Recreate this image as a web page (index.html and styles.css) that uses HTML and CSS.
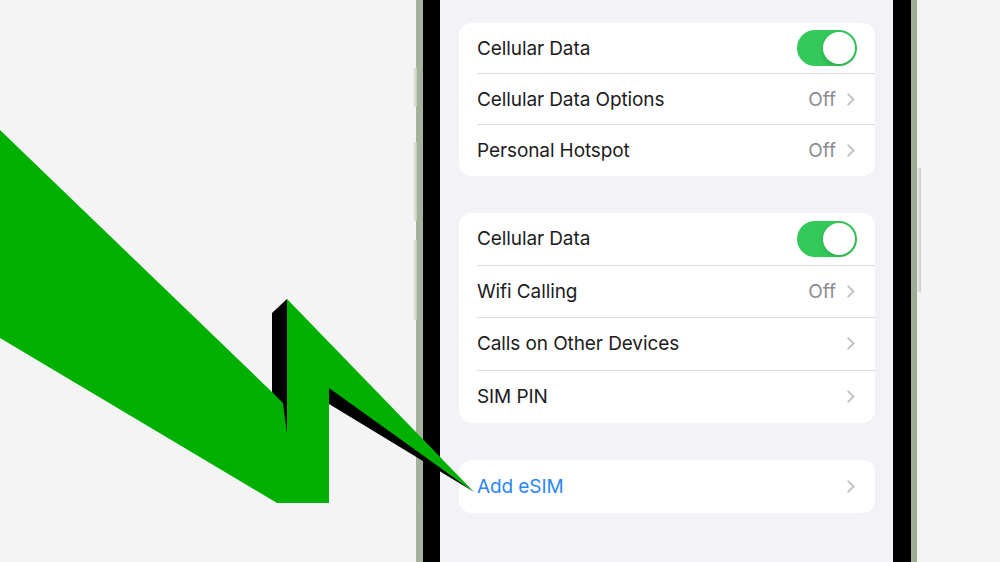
FILE: index.html
```html
<!DOCTYPE html>
<html>
<head>
<meta charset="utf-8">
<link rel="stylesheet" href="styles.css">
</head>
<body>
<div class="stage">
  <div class="phone">
    <span class="btn btn-l1"></span>
    <span class="btn btn-l2"></span>
    <span class="btn btn-l3"></span>
    <span class="btn btn-r1"></span>
    <div class="bezel">
      <div class="screen">
        <div class="card card-a">
          <div class="row"><span class="label">Cellular Data</span><span class="toggle"><span class="knob"></span></span></div>
          <div class="row"><span class="label">Cellular Data Options</span><span class="value">Off</span><svg class="chev" viewBox="0 0 8 13"><path d="M1.2 1.2 L6.6 6.5 L1.2 11.8"/></svg></div>
          <div class="row"><span class="label">Personal Hotspot</span><span class="value">Off</span><svg class="chev" viewBox="0 0 8 13"><path d="M1.2 1.2 L6.6 6.5 L1.2 11.8"/></svg></div>
        </div>
        <div class="card card-b">
          <div class="row"><span class="label">Cellular Data</span><span class="toggle"><span class="knob"></span></span></div>
          <div class="row"><span class="label">Wifi Calling</span><span class="value">Off</span><svg class="chev" viewBox="0 0 8 13"><path d="M1.2 1.2 L6.6 6.5 L1.2 11.8"/></svg></div>
          <div class="row"><span class="label">Calls on Other Devices</span><svg class="chev" viewBox="0 0 8 13"><path d="M1.2 1.2 L6.6 6.5 L1.2 11.8"/></svg></div>
          <div class="row"><span class="label">SIM PIN</span><svg class="chev" viewBox="0 0 8 13"><path d="M1.2 1.2 L6.6 6.5 L1.2 11.8"/></svg></div>
        </div>
        <div class="card card-c">
          <div class="row"><span class="label link">Add eSIM</span><svg class="chev" viewBox="0 0 8 13"><path d="M1.2 1.2 L6.6 6.5 L1.2 11.8"/></svg></div>
        </div>
      </div>
    </div>
  </div>
</div>
<svg class="arrow" viewBox="0 0 1000 562" width="1000" height="562">
  <polygon class="shadow" points="272,313 287,299 287,434 272,392"/>
  <polygon class="shadow" points="329,386 474,492 329,404"/>
  <polygon class="green" points="0,130 272,392 283,403 287,434 287,299 474,492 329,388 329,503 277,503 0,338"/>
</svg>
</body>
</html>
```

FILE: styles.css
```css
html, body {
  margin: 0;
  padding: 0;
  width: 1000px;
  height: 562px;
  overflow: hidden;
  background: #f4f4f5;
  font-family: Inter, "Liberation Sans", Arial, sans-serif;
}

.stage {
  display: flex;
  padding-left: 416px;
  height: 562px;
}

.phone {
  position: relative;
  width: 501px;
  height: 562px;
  padding: 0 6px 0 7px;
  box-sizing: border-box;
  background: linear-gradient(90deg, #a3b09c 0, #dde4d8 25%, #cfd8ca 60%, #9eab97 100%);
  display: flex;
}

.btn {
  position: absolute;
  width: 4px;
  background: linear-gradient(90deg, #eef1eb, #c3ccbd);
  border-radius: 1px;
}
.btn-l1 { left: -3px; top: 68px; height: 39px; }
.btn-l2 { left: -3px; top: 142px; height: 79px; }
.btn-l3 { left: -3px; top: 240px; height: 80px; }
.btn-r1 { right: -4px; top: 168px; height: 124px; }

.bezel {
  flex: 1;
  background: #000;
  padding: 0 18px 0 17px;
  display: flex;
}

.screen {
  flex: 1;
  background: #f2f2f7;
  padding: 23px 18px 0 19px;
  display: flex;
  flex-direction: column;
  gap: 37px;
}

.card {
  background: #fff;
  border-radius: 13px;
  display: flex;
  flex-direction: column;
}

.row {
  margin-left: 18px;
  padding-right: 20px;
  display: flex;
  align-items: center;
  border-bottom: 1px solid #dcdce0;
  box-sizing: border-box;
}
.card-a .row { height: 51px; }
.card-b .row { height: 52.5px; }
.card-c .row { height: 53px; }
.card .row:last-child { border-bottom: none; }

.label {
  flex: 1;
  font-size: 19px;
  color: #1c1c1e;
  letter-spacing: -0.1px;
}
.label.link { color: #2a86f7; }

.value {
  font-size: 19px;
  color: #8b8b90;
  margin-right: 11px;
}

.chev {
  width: 8px;
  height: 13px;
  fill: none;
  stroke: #c3c3c8;
  stroke-width: 1.9;
  stroke-linecap: round;
  stroke-linejoin: round;
}

.toggle {
  width: 60px;
  height: 36px;
  border-radius: 18px;
  background: #34c759;
  display: flex;
  align-items: center;
  justify-content: flex-end;
  padding: 0 2px;
  box-sizing: border-box;
  margin-right: -2px;
}
.knob {
  width: 32px;
  height: 32px;
  border-radius: 50%;
  background: #fff;
  box-shadow: 0 2px 4px rgba(0,0,0,0.15);
}

.arrow {
  position: absolute;
  left: 0;
  top: 0;
  pointer-events: none;
}
.arrow .green { fill: #00b000; }
.arrow .shadow { fill: #000; }
```
